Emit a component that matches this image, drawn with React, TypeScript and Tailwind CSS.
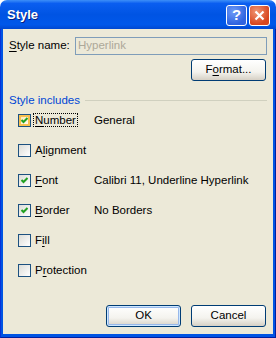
import React from "react";

const Check: React.FC<{ checked?: boolean; hot?: boolean }> = ({ checked, hot }) => (
  <span className="relative block w-[13px] h-[13px] border border-[#1c5180] bg-[linear-gradient(135deg,#dcdcd7,#ffffff)]">
    {hot && (
      <span className="absolute inset-0 border-2 border-[#f9c04f] bg-[linear-gradient(135deg,#fbe9b8,#fffaf0)]" />
    )}
    {checked && (
      <svg className="absolute left-0 top-0" width="11" height="11" viewBox="0 0 11 11">
        <path d="M2.5 5 L4.5 7 L8.5 3" stroke="#21a121" strokeWidth="2" fill="none" />
      </svg>
    )}
  </span>
);

const U: React.FC<{ children: React.ReactNode }> = ({ children }) => <span className="underline underline-offset-2">{children}</span>;

const rows: { pre: string; key: string; post: string; value: string; checked: boolean; focus?: boolean }[] = [
  { pre: "", key: "N", post: "umber", value: "General", checked: true, focus: true },
  { pre: "A", key: "l", post: "ignment", value: "", checked: false },
  { pre: "", key: "F", post: "ont", value: "Calibri 11, Underline Hyperlink", checked: true },
  { pre: "", key: "B", post: "order", value: "No Borders", checked: true },
  { pre: "F", key: "i", post: "ll", value: "", checked: false },
  { pre: "P", key: "r", post: "otection", value: "", checked: false },
];

const XpButton: React.FC<{ children: React.ReactNode; primary?: boolean; className?: string }> = ({ children, primary, className }) => (
  <div className={`h-[22px] w-[75px] rounded-[3px] border border-[#003c74] bg-[linear-gradient(to_bottom,#ffffff,#f4f3ee_60%,#d6d0c5)] flex items-center justify-center ${primary ? "shadow-[inset_0_0_0_1px_#cee7ff,inset_0_0_0_2px_#98b8ea]" : ""} ${className ?? ""}`}>
    {children}
  </div>
);

const App: React.FC = () => {
  return (
    <div className="w-[276px] h-[338px] flex flex-col font-['Liberation_Sans',sans-serif] text-[11.5px] text-black">
      <div className="h-[29px] rounded-t-[7px] bg-[linear-gradient(to_bottom,#3d8ff8_0%,#0a5ef0_12%,#0054e3_50%,#0057ea_85%,#0047d0_100%)] flex items-center pl-[7px] pr-[6px]">
        <span className="text-white font-bold text-[13px] font-['Trebuchet_MS','Liberation_Sans',sans-serif] [text-shadow:1px_1px_#0a1e7c]">Style</span>
        <div className="ml-auto flex gap-[2px] pt-[1px]">
          <div className="w-[21px] h-[21px] rounded-[3px] border border-white bg-[radial-gradient(circle_at_35%_30%,#6f9cf7,#2f63e0_70%)] flex items-center justify-center text-white font-bold text-[15px] font-['Liberation_Sans',sans-serif]">?</div>
          <div className="w-[21px] h-[21px] rounded-[3px] border border-white bg-[radial-gradient(circle_at_35%_30%,#f09775,#d8461f_70%)] flex items-center justify-center">
            <svg width="11" height="11" viewBox="0 0 11 11">
              <path d="M1.5 1.5 L9.5 9.5 M9.5 1.5 L1.5 9.5" stroke="#fff" strokeWidth="2.2" />
            </svg>
          </div>
        </div>
      </div>
      <div className="flex-1 flex bg-[#0054e3] border-l border-l-[#0831d9] border-r border-r-[#001ea0] border-b border-b-[#001ea0] px-[2px] pb-[3px]">
        <div className="flex-1 bg-[#ece9d8] flex flex-col pl-[6px] pr-[6px]">
          <div className="flex items-center mt-[8px]">
            <span className="w-[66px]"><U>S</U>tyle name:</span>
            <div className="flex-1 h-[18px] border border-[#7f9db9] flex items-center pl-[2px] text-[#aca899]">Hyperlink</div>
          </div>
          <div className="flex justify-end mt-[4px]">
            <XpButton className="h-[22px] mr-[1px]">F<U>o</U>rmat...</XpButton>
          </div>
          <div className="flex items-center mt-[11px]">
            <span className="text-[#0046d5]">Style includes</span>
            <div className="flex-1 h-px bg-[#d0d0bf] ml-[5px]" />
          </div>
          <div className="flex flex-col mt-[5px] pl-[9px] gap-[17px]">
            {rows.map((r) => (
              <div key={r.post} className="flex items-center h-[13px]">
                <Check checked={r.checked} hot={r.focus} />
                <span className="ml-[2px] px-[1px] w-[61px]">
                  <span className={r.focus ? "outline outline-1 outline-dotted outline-black px-[1px]" : "px-[1px]"}>
                    {r.pre}<U>{r.key}</U>{r.post}
                  </span>
                </span>
                <span>{r.value}</span>
              </div>
            ))}
          </div>
          <div className="mt-auto mb-[7px] flex justify-end gap-[10px] pr-[1px]">
            <XpButton primary>OK</XpButton>
            <XpButton>Cancel</XpButton>
          </div>
        </div>
      </div>
    </div>
  );
};

export default App;
